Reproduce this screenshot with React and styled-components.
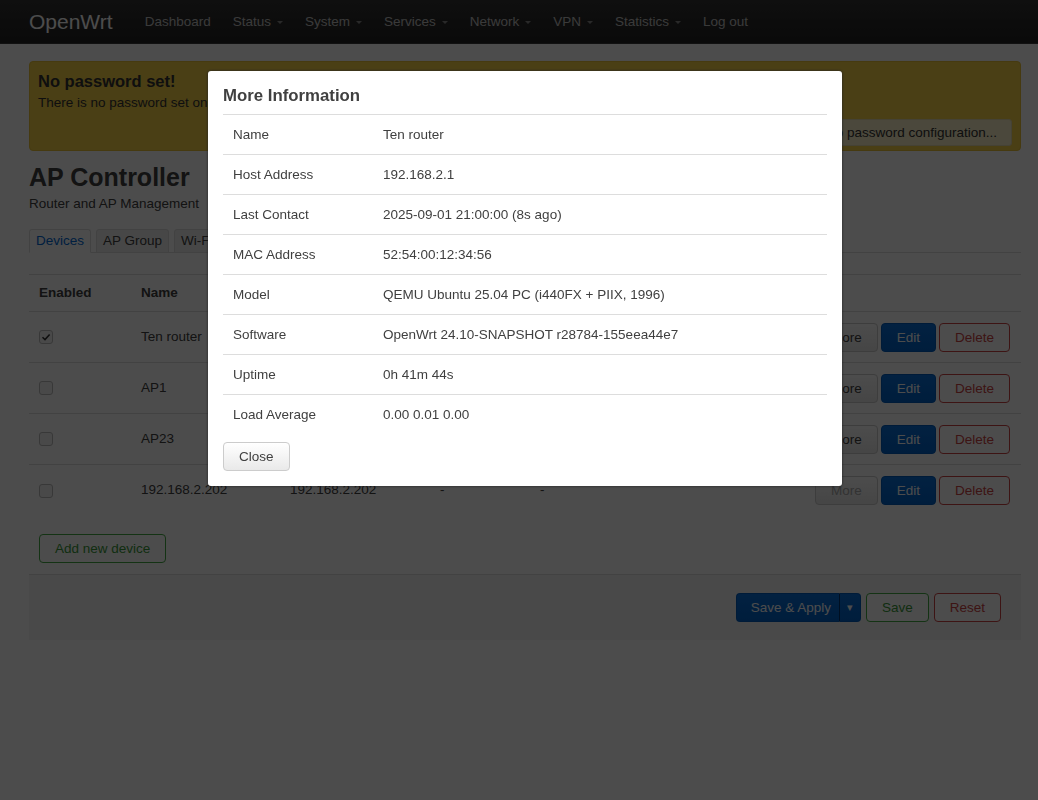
import React from 'react';
import styled, { createGlobalStyle, css } from 'styled-components';

const GlobalStyle = createGlobalStyle`
  html, body { margin: 0; padding: 0; background: #fff; }
  body {
    font-family: "Liberation Sans", Arial, Helvetica, sans-serif;
    font-size: 13.5px;
    line-height: 20px;
    color: #404040;
  }
  * { box-sizing: border-box; }
`;

const TopBar = styled.header`
  height: 44px;
  background: linear-gradient(to bottom, #333, #222);
  border-bottom: 1px solid #3a3a3a;
  display: flex;
  align-items: center;
  padding-left: 29px;
`;

const Brand = styled.a`
  font-size: 21px;
  color: #fff;
  margin-right: 21px;
  text-decoration: none;
`;

const NavLink = styled.a`
  display: flex;
  align-items: center;
  padding: 0 11px;
  color: #c4c4c4;
  text-decoration: none;
  font-size: 13.5px;
`;

const Caret = styled.span`
  width: 0;
  height: 0;
  margin-left: 6px;
  margin-top: 1px;
  border-left: 3px solid transparent;
  border-right: 3px solid transparent;
  border-top: 3px solid #8a8a8a;
`;

const Main = styled.main`
  margin: 17px 17px 0 29px;
`;

const Alert = styled.div`
  background: #f8d248;
  border: 1px solid #e9c236;
  border-radius: 4px;
  padding: 9px 8px 4px;
`;

const AlertTitle = styled.h4`
  margin: 0;
  font-size: 16.5px;
  line-height: 20px;
  font-weight: bold;
  color: #333;
`;

const AlertText = styled.p`
  margin: 2px 0 0;
  color: #333;
`;

const AlertActions = styled.div`
  display: flex;
  justify-content: flex-end;
  margin-top: 6px;
`;

const AlertButton = styled.button`
  height: 27px;
  padding: 0 14px;
  font: inherit;
  color: #333;
  background: #faf1c9;
  border: 1px solid #e8dcae;
  border-radius: 3px;
`;

const PageTitle = styled.h2`
  margin: 11px 0 0;
  font-size: 25px;
  line-height: 30px;
  font-weight: bold;
  color: #404040;
`;

const Description = styled.div`
  margin-top: 2px;
`;

const Tabs = styled.ul`
  margin: 15px 0 0;
  padding: 0;
  list-style: none;
  display: flex;
  gap: 5px;
  border-bottom: 1px solid #ddd;
`;

const Tab = styled.li`
  line-height: 22px;
  padding: 0 6px;
  margin-bottom: -1px;
  border: 1px solid #ddd;
  border-radius: 3px 3px 0 0;
  background: ${(p) => (p.$active ? '#fff' : '#eee')};
  border-bottom-color: ${(p) => (p.$active ? '#fff' : '#ddd')};
  color: ${(p) => (p.$active ? '#0069d6' : '#404040')};
`;

const Table = styled.table`
  width: 100%;
  margin-top: 21px;
  border-collapse: collapse;
`;

const HeadCell = styled.th`
  height: 37px;
  padding: 0 10px;
  text-align: left;
  font-weight: bold;
  border-top: 1px solid #ddd;
  white-space: nowrap;
  width: ${(p) => p.$w || 'auto'};
`;

const Cell = styled.td`
  height: 51px;
  padding: 0 10px;
  border-top: 1px solid #ddd;
  vertical-align: middle;
  white-space: nowrap;
`;

const ActionCell = styled(Cell)`
  padding-right: 11px;
  text-align: right;
`;

const Actions = styled.div`
  display: inline-flex;
  gap: 3px;
`;

const CheckBox = styled.span`
  display: inline-flex;
  align-items: center;
  justify-content: center;
  width: 14px;
  height: 14px;
  border: 1px solid #bbb;
  border-radius: 3px;
  background: #f4f4f4;
  color: #333;
  vertical-align: middle;
`;

const variants = {
  default: css`
    color: #404040;
    background: linear-gradient(to bottom, #fff, #e9e9e9);
    border-color: #ccc;
  `,
  primary: css`
    color: #fff;
    background: linear-gradient(to bottom, #0a70da, #0062c9);
    border-color: #005cbd;
  `,
  negative: css`
    color: #c44;
    background: #fff;
    border-color: #c44;
  `,
  positive: css`
    color: #3a9a3a;
    background: #fff;
    border-color: #4a4;
  `,
};

const Button = styled.button`
  height: 29px;
  padding: 0 15px;
  font: inherit;
  line-height: 27px;
  border: 1px solid;
  border-radius: 4px;
  cursor: pointer;
  ${(p) => variants[p.$variant || 'default']}
  ${(p) => p.$muted && css`color: #aaa;`}
`;

const AddRow = styled.div`
  padding: 18px 10px 11px;
`;

const PageActions = styled.div`
  display: flex;
  justify-content: flex-end;
  gap: 5px;
  padding: 18px 20px;
  background: #f5f5f5;
  border-top: 1px solid #ddd;
`;

const Split = styled.div`
  display: flex;
  height: 29px;
`;

const SplitMain = styled(Button)`
  padding: 0 8px 0 14px;
  border-radius: 4px 0 0 4px;
  border-right: none;
`;

const SplitToggle = styled(Button)`
  width: 22px;
  padding: 0;
  border-radius: 0 4px 4px 0;
  border-left: 1px solid #00356e;
  font-size: 11px;
`;

const Overlay = styled.div`
  position: fixed;
  top: 0;
  left: 0;
  width: 100%;
  height: 100%;
  background-color: rgba(0, 0, 0, 0.7);
`;

const Modal = styled.div`
  width: 634px;
  margin: 71px 0 0 208px;
  padding: 15px;
  background: #fff;
  border-radius: 3px;
  box-shadow: 0 0 3px #222;
`;

const ModalTitle = styled.h4`
  margin: 0 0 8px;
  font-size: 16.8px;
  line-height: 20px;
  font-weight: bold;
  color: #404040;
`;

const InfoTable = styled.table`
  width: 100%;
  border-collapse: collapse;
`;

const InfoLabel = styled.td`
  width: 150px;
  height: 40px;
  padding: 0 10px;
  border-top: 1px solid #ddd;
`;

const InfoValue = styled.td`
  height: 40px;
  padding: 0 10px;
  border-top: 1px solid #ddd;
`;

const ModalFooter = styled.div`
  margin-top: 7px;
`;

const Check = () => (
  <svg width="10" height="10" viewBox="0 0 10 10">
    <path d="M1.5 5.2 L4 7.6 L8.6 2.4" fill="none" stroke="currentColor" strokeWidth="1.5" />
  </svg>
);

const navItems = [
  { label: 'Dashboard' },
  { label: 'Status', menu: true },
  { label: 'System', menu: true },
  { label: 'Services', menu: true },
  { label: 'Network', menu: true },
  { label: 'VPN', menu: true },
  { label: 'Statistics', menu: true },
  { label: 'Log out' },
];

const devices = [
  { enabled: true, name: 'Ten router', host: '192.168.2.1', model: 'QEMU', uptime: '0h 41m' },
  { enabled: false, name: 'AP1', host: '192.168.2.10', model: '-', uptime: '-' },
  { enabled: false, name: 'AP23', host: '192.168.2.23', model: '-', uptime: '-' },
  { enabled: false, name: '192.168.2.202', host: '192.168.2.202', model: '-', uptime: '-', offline: true },
];

const info = [
  ['Name', 'Ten router'],
  ['Host Address', '192.168.2.1'],
  ['Last Contact', '2025-09-01 21:00:00 (8s ago)'],
  ['MAC Address', '52:54:00:12:34:56'],
  ['Model', 'QEMU Ubuntu 25.04 PC (i440FX + PIIX, 1996)'],
  ['Software', 'OpenWrt 24.10-SNAPSHOT r28784-155eea44e7'],
  ['Uptime', '0h 41m 44s'],
  ['Load Average', '0.00 0.01 0.00'],
];

export default function App() {
  return (
    <>
      <GlobalStyle />
      <TopBar>
        <Brand>OpenWrt</Brand>
        {navItems.map((n) => (
          <NavLink key={n.label}>
            {n.label}
            {n.menu && <Caret />}
          </NavLink>
        ))}
      </TopBar>
      <Main>
        <Alert>
          <AlertTitle>No password set!</AlertTitle>
          <AlertText>
            There is no password set on this router. Please configure a root password to protect the web interface.
          </AlertText>
          <AlertActions>
            <AlertButton>Go to password configuration...</AlertButton>
          </AlertActions>
        </Alert>
        <PageTitle>AP Controller</PageTitle>
        <Description>Router and AP Management</Description>
        <Tabs>
          <Tab $active>Devices</Tab>
          <Tab>AP Group</Tab>
          <Tab>Wi-Fi Networks</Tab>
        </Tabs>
        <Table>
          <thead>
            <tr>
              <HeadCell $w="102px">Enabled</HeadCell>
              <HeadCell $w="149px">Name</HeadCell>
              <HeadCell $w="150px">Host</HeadCell>
              <HeadCell $w="100px">Model</HeadCell>
              <HeadCell $w="120px">Uptime</HeadCell>
              <HeadCell />
            </tr>
          </thead>
          <tbody>
            {devices.map((d) => (
              <tr key={d.name}>
                <Cell>
                  <CheckBox>{d.enabled && <Check />}</CheckBox>
                </Cell>
                <Cell>{d.name}</Cell>
                <Cell>{d.host}</Cell>
                <Cell>{d.model}</Cell>
                <Cell>{d.uptime}</Cell>
                <ActionCell>
                  <Actions>
                    <Button $muted={d.offline}>More</Button>
                    <Button $variant="primary">Edit</Button>
                    <Button $variant="negative">Delete</Button>
                  </Actions>
                </ActionCell>
              </tr>
            ))}
          </tbody>
        </Table>
        <AddRow>
          <Button $variant="positive">Add new device</Button>
        </AddRow>
        <PageActions>
          <Split>
            <SplitMain $variant="primary">Save &amp; Apply</SplitMain>
            <SplitToggle $variant="primary">▾</SplitToggle>
          </Split>
          <Button $variant="positive">Save</Button>
          <Button $variant="negative">Reset</Button>
        </PageActions>
      </Main>
      <Overlay>
        <Modal>
          <ModalTitle>More Information</ModalTitle>
          <InfoTable>
            <tbody>
              {info.map(([k, v]) => (
                <tr key={k}>
                  <InfoLabel>{k}</InfoLabel>
                  <InfoValue>{v}</InfoValue>
                </tr>
              ))}
            </tbody>
          </InfoTable>
          <ModalFooter>
            <Button>Close</Button>
          </ModalFooter>
        </Modal>
      </Overlay>
    </>
  );
}
